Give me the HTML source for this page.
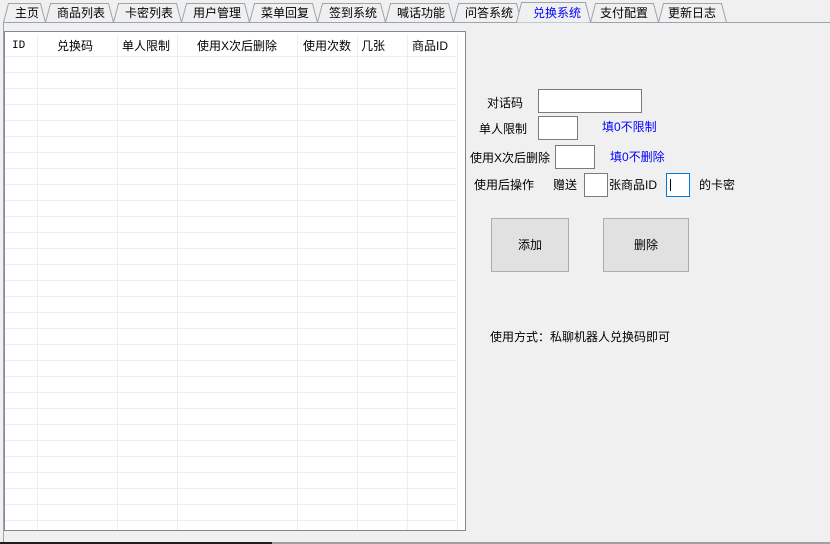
<!DOCTYPE html>
<html><head><meta charset="utf-8"><style>
*{margin:0;padding:0;box-sizing:border-box}
body{width:830px;height:544px;background:#f0f0f0;position:relative;overflow:hidden;font-family:"Liberation Sans","Noto Sans CJK SC","WenQuanYi Zen Hei",sans-serif;font-size:12px;color:#000}
.a{position:absolute;white-space:nowrap;line-height:14px}
.tab{position:absolute;top:6px;line-height:14px;font-size:12px}
.box{position:absolute;background:#fff;border:1px solid #7a7a7a}
.btn{position:absolute;background:#e1e1e1;border:1px solid #adadad;text-align:center}
.blue{color:#0000ff}
</style></head><body>
<svg class="a" style="left:0;top:0" width="830" height="544">
<g fill="none" stroke="#9aa5b0" stroke-width="1">
<path d="M3.5,544 V22.5 H830"/>
<path d="M3.5,22.5 L8.5,3.5 H40.5 L45.5,22.5"/>
<path d="M45.5,22.5 L50.5,3.5 H108.5 L113.5,22.5"/>
<path d="M113.5,22.5 L118.5,3.5 H176.5 L181.5,22.5"/>
<path d="M181.5,22.5 L186.5,3.5 H244.5 L249.5,22.5"/>
<path d="M249.5,22.5 L254.5,3.5 H312.5 L317.5,22.5"/>
<path d="M317.5,22.5 L322.5,3.5 H380.5 L385.5,22.5"/>
<path d="M385.5,22.5 L390.5,3.5 H448.5 L453.5,22.5"/>
<path d="M453.5,22.5 L458.5,3.5 H516.5 L521.5,22.5"/>
<path d="M590.5,22.5 L595.5,3.5 H653.5 L658.5,22.5"/>
<path d="M658.5,22.5 L663.5,3.5 H721.5 L726.5,22.5"/>
</g>
<path d="M516.5,22.5 L521.5,2.5 H585.5 L590.5,22.5" fill="#f0f0f0" stroke="#9aa5b0"/>
<rect x="0" y="542" width="272" height="2" fill="#1e1e1e"/>
<rect x="272" y="542" width="558" height="2" fill="#a0a0a0"/>
</svg>
<div class="tab" style="left:15px">主页</div>
<div class="tab" style="left:57px">商品列表</div>
<div class="tab" style="left:125px">卡密列表</div>
<div class="tab" style="left:193px">用户管理</div>
<div class="tab" style="left:261px">菜单回复</div>
<div class="tab" style="left:329px">签到系统</div>
<div class="tab" style="left:397px">喊话功能</div>
<div class="tab" style="left:465px">问答系统</div>
<div class="tab blue" style="left:533px">兑换系统</div>
<div class="tab" style="left:600px">支付配置</div>
<div class="tab" style="left:668px">更新日志</div>

<div class="a" style="left:4px;top:31px;width:462px;height:500px;background:#fff;border:1px solid #828790;overflow:hidden">
<svg width="462" height="500" style="position:absolute;left:0;top:0">
<g stroke="#eeeeee" stroke-width="1">
<path d="M32.5,2V500 M112.5,2V500 M172.5,2V500 M292.5,2V500 M352.5,2V500 M402.5,2V500 M452.5,2V500"/>
<path d="M0,24.5H452 M0,40.5H452 M0,56.5H452 M0,72.5H452 M0,88.5H452 M0,104.5H452 M0,120.5H452 M0,136.5H452 M0,152.5H452 M0,168.5H452 M0,184.5H452 M0,200.5H452 M0,216.5H452 M0,232.5H452 M0,248.5H452 M0,264.5H452 M0,280.5H452 M0,296.5H452 M0,312.5H452 M0,328.5H452 M0,344.5H452 M0,360.5H452 M0,376.5H452 M0,392.5H452 M0,408.5H452 M0,424.5H452 M0,440.5H452 M0,456.5H452 M0,472.5H452 M0,488.5H452"/>
</g>
</svg>
<div class="a" style="left:7px;top:7px;font-family:'Liberation Mono',monospace;font-size:11px">ID</div>
<div class="a" style="left:52px;top:7px">兑换码</div>
<div class="a" style="left:117px;top:7px">单人限制</div>
<div class="a" style="left:192px;top:7px">使用X次后删除</div>
<div class="a" style="left:298px;top:7px">使用次数</div>
<div class="a" style="left:356px;top:7px">几张</div>
<div class="a" style="left:407px;top:7px">商品ID</div>
</div>

<div class="a" style="left:487px;top:96px">对话码</div>
<div class="box" style="left:538px;top:89px;width:104px;height:24px"></div>
<div class="a" style="left:479px;top:122px">单人限制</div>
<div class="box" style="left:538px;top:116px;width:40px;height:24px"></div>
<div class="a blue" style="left:602px;top:120px">填0不限制</div>
<div class="a" style="left:470px;top:151px">使用X次后删除</div>
<div class="box" style="left:555px;top:145px;width:40px;height:24px"></div>
<div class="a blue" style="left:610px;top:150px">填0不删除</div>
<div class="a" style="left:474px;top:178px">使用后操作</div>
<div class="a" style="left:553px;top:178px">赠送</div>
<div class="box" style="left:584px;top:173px;width:24px;height:24px"></div>
<div class="a" style="left:609px;top:178px">张商品ID</div>
<div class="box" style="left:666px;top:173px;width:24px;height:24px;border-color:#0078d7"><div style="position:absolute;left:3px;top:5px;width:1px;height:12px;background:#000"></div></div>
<div class="a" style="left:699px;top:178px">的卡密</div>
<div class="btn" style="left:491px;top:218px;width:78px;height:54px;line-height:52px">添加</div>
<div class="btn" style="left:603px;top:218px;width:86px;height:54px;line-height:52px">删除</div>
<div class="a" style="left:490px;top:330px">使用方式：私聊机器人兑换码即可</div>
</body></html>
